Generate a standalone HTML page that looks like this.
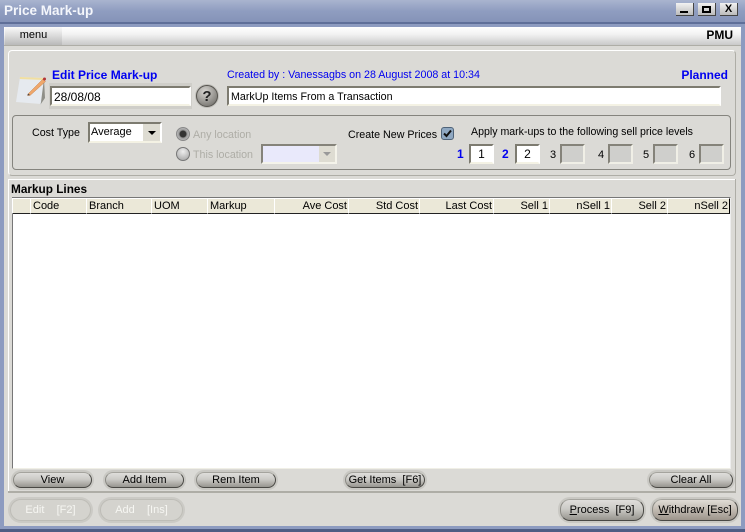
<!DOCTYPE html>
<html><head><meta charset="utf-8">
<style>
html,body{margin:0;padding:0;width:745px;height:532px;overflow:hidden}
body{position:relative;background:#dbdad6;font:10.7px "Liberation Sans",sans-serif;color:#000}
.a{position:absolute;white-space:nowrap;box-sizing:border-box}
.inp{position:absolute;box-sizing:border-box;background:#fff;border:2px solid;border-color:#7d7b70 #fff #f4f2e4 #7d7b70;line-height:18px}
.inp.d{background:#cfcfcc;border-color:#85837a #f0efe6 #f0efe6 #85837a}
.hd{position:absolute;top:198px;height:16px;box-sizing:border-box;background:#ebe8d8;border-top:1px solid #fff;border-left:1px solid #fff;border-right:1px solid #000;border-bottom:1px solid #222;line-height:15px;padding:0 1px 0 2px;overflow:hidden;white-space:nowrap;font-size:11px}
.r{text-align:right}
.btn{position:absolute;box-sizing:border-box;border-radius:9px;text-align:center;background:linear-gradient(#dfdedb,#cbcac6 45%,#97958f 100%);border:1px solid #4a4945;border-left-color:#8a8983;border-top-color:#a5a49e;box-shadow:0 0 0 2px #c9c8c3;white-space:nowrap;line-height:14px;font-size:11px}
.btn.big{border-radius:10px;line-height:21px}
.btn.dis{background:#d4d3ce;border:1px solid #bebdb7;box-shadow:0 0 0 2px #cbcac5;color:#f6f6f2;line-height:21px}
</style></head><body>
<!-- window frame -->
<div class="a" style="left:0;top:0;width:745px;height:22px;background:linear-gradient(#a9b4cf,#8f9dc0 50%,#8593b8)"></div>
<div class="a" style="left:0;top:22px;width:745px;height:2px;background:#5f6f99"></div>
<div class="a" style="left:0;top:24px;width:745px;height:3px;background:#8d9bc0"></div>
<div class="a" style="left:0;top:24px;width:4px;height:508px;background:#8d9bc0"></div>
<div class="a" style="left:741px;top:24px;width:4px;height:508px;background:#8d9bc0"></div>
<div class="a" style="left:0;top:526px;width:745px;height:3px;background:#8d9bc0"></div>
<div class="a" style="left:0;top:529px;width:745px;height:3px;background:#4f5d84"></div>
<div class="a" style="left:4px;top:3px;font-size:13.5px;font-weight:bold;color:#f4f6fb;line-height:15px">Price Mark-up</div>
<!-- window buttons -->
<div class="a" style="left:676px;top:3px;width:18px;height:13px;background:linear-gradient(#f2f2f2,#bcbcbc);border-right:1px solid #444;border-bottom:1px solid #444"><div class="a" style="left:4px;top:8px;width:8px;height:2px;background:#000"></div></div>
<div class="a" style="left:698px;top:3px;width:18px;height:13px;background:linear-gradient(#f2f2f2,#bcbcbc);border-right:1px solid #444;border-bottom:1px solid #444"><div class="a" style="left:4px;top:3px;width:9px;height:7px;border:2px solid #000;border-top-width:2px"></div></div>
<div class="a" style="left:720px;top:3px;width:18px;height:13px;background:linear-gradient(#f2f2f2,#bcbcbc);border-right:1px solid #444;border-bottom:1px solid #444;font-weight:bold;font-size:11px;text-align:center;line-height:12px">X</div>
<!-- menu bar -->
<div class="a" style="left:4px;top:27px;width:737px;height:19px;background:linear-gradient(#fff,#f2f2f2 40%,#c9c9c9);border-bottom:1px solid #aeada6"></div>
<div class="a" style="left:5px;top:27px;width:57px;height:18px;background:linear-gradient(#fafafa,#b9b9b9);text-align:center;line-height:17px;font-size:11px">menu</div>
<div class="a" style="right:12px;top:28px;font-weight:bold;font-size:12px;line-height:15px">PMU</div>
<!-- top panel -->
<div class="a" style="left:8px;top:50px;width:728px;height:126px;border-top:1px solid #fff;border-left:1px solid #fff;border-right:1px solid #aeada6;border-bottom:1px solid #aeada6;border-radius:4px"></div>
<svg class="a" style="left:16px;top:74px" width="34" height="34" viewBox="0 0 34 34">
<path d="M4 3L28 4L25 30L0 28Z" fill="#e6eaef"/>
<path d="M4 3L28 4L27.700 6L3.700 5Z" fill="#f1dfa0"/>
<path d="M28 5L29 24L24.500 30.500L25 28Z" fill="#8f8f88"/>
<path d="M12 20L27 5L29.500 7.500L14 21.500L11.500 21.500Z" fill="#efa76b" stroke="#c78450" stroke-width=".5"/>
<circle cx="28.500" cy="5" r="1.500" fill="#b3363a"/>
<path d="M12 19.500L11.500 21.500L14 21Z" fill="#444"/>
</svg>
<div class="a" style="left:52px;top:68px;color:#0000f0;font-weight:bold;font-size:12px;line-height:14px">Edit Price Mark-up</div>
<div class="a" style="left:49px;top:83px;width:143px;height:26px;background:#cfcec9"></div>
<div class="inp" style="left:50px;top:86px;width:141px;height:20px;padding-left:2px;font-size:12px">28/08/08</div>
<svg class="a" style="left:194px;top:83px" width="26" height="26"><defs><radialGradient id="g" cx=".4" cy=".3" r=".8"><stop offset="0" stop-color="#d8d6d2"/><stop offset="1" stop-color="#6f6d68"/></radialGradient></defs><circle cx="13" cy="13" r="12" fill="#c0bfba"/><circle cx="13" cy="13" r="10.500" fill="url(#g)" stroke="#55534e"/><text x="13" y="18" text-anchor="middle" font-family="Liberation Sans" font-weight="bold" font-size="15" fill="#222">?</text></svg>
<div class="a" style="left:227px;top:68px;color:#0000f0;font-size:10.7px;line-height:14px">Created by : Vanessagbs on 28 August 2008 at 10:34</div>
<div class="a" style="right:17px;top:68px;color:#0000f0;font-weight:bold;font-size:12px;line-height:15px">Planned</div>
<div class="inp" style="left:227px;top:86px;width:494px;height:20px;padding-left:2px;font-size:10.7px">MarkUp Items From a Transaction</div>
<!-- cost panel -->
<div class="a" style="left:12px;top:115px;width:719px;height:55px;border:1px solid #85847e;border-radius:4px"></div>
<div class="a" style="left:32px;top:126px;line-height:14px">Cost Type</div>
<div class="inp" style="left:88px;top:122px;width:74px;height:21px;padding-left:1px;font-size:11px;line-height:17px">Average<div class="a" style="right:0;top:0;width:18px;height:17px;background:#dedcd2;border-left:1px solid #fff"><div class="a" style="left:5px;top:7px;border:4px solid transparent;border-top:4px solid #000;border-bottom:0"></div></div></div>
<div class="a" style="left:176px;top:127px;width:14px;height:14px;border-radius:50%;background:radial-gradient(circle at 50% 50%,#333 0 3px,#999 4px,#ddd);border:1px solid #888"></div>
<div class="a" style="left:193px;top:128px;color:#aeada6;line-height:14px">Any location</div>
<div class="a" style="left:176px;top:147px;width:14px;height:14px;border-radius:50%;background:radial-gradient(circle at 50% 30%,#eee,#9f9f9f);border:1px solid #777"></div>
<div class="a" style="left:193px;top:148px;color:#aeada6;line-height:14px">This location</div>
<div class="inp" style="left:261px;top:144px;width:76px;height:20px;background:#e9e9fb;border-color:#85837a #f4f3ea #f4f3ea #85837a"><div class="a" style="right:0;top:0;width:16px;height:16px;background:#dedcd2"><div class="a" style="left:4px;top:6px;border:4px solid transparent;border-top:4px solid #999;border-bottom:0"></div></div></div>
<div class="a" style="left:348px;top:128px;line-height:14px">Create New Prices</div>
<div class="a" style="left:441px;top:127px;width:13px;height:13px;background:#8fa8c2;border:1px solid #4f6379;border-radius:3px"><svg width="11" height="11" style="display:block"><path d="M2 5.500L4.500 8 9 2.500" stroke="#111" stroke-width="2" fill="none"/></svg></div>
<div class="a" style="left:471px;top:125px;font-size:10.6px;line-height:14px">Apply mark-ups to the following sell price levels</div>
<div class="a" style="left:457px;top:147px;color:#0000f0;font-weight:bold;font-size:12px;line-height:14px">1</div>
<div class="inp" style="left:469px;top:144px;width:25px;height:20px;text-align:center;font-size:12px;line-height:17px">1</div>
<div class="a" style="left:502px;top:147px;color:#0000f0;font-weight:bold;font-size:12px;line-height:14px">2</div>
<div class="inp" style="left:515px;top:144px;width:25px;height:20px;text-align:center;font-size:12px;line-height:17px">2</div>
<div class="a" style="left:550px;top:148px;line-height:14px;font-size:11px">3</div><div class="inp d" style="left:560px;top:144px;width:25px;height:20px"></div>
<div class="a" style="left:598px;top:148px;line-height:14px;font-size:11px">4</div><div class="inp d" style="left:608px;top:144px;width:25px;height:20px"></div>
<div class="a" style="left:643px;top:148px;line-height:14px;font-size:11px">5</div><div class="inp d" style="left:653px;top:144px;width:25px;height:20px"></div>
<div class="a" style="left:689px;top:148px;line-height:14px;font-size:11px">6</div><div class="inp d" style="left:699px;top:144px;width:25px;height:20px"></div>
<!-- markup panel -->
<div class="a" style="left:8px;top:179px;width:728px;height:1px;background:#fff"></div>
<div class="a" style="left:8px;top:179px;width:1px;height:313px;background:#fff"></div>
<div class="a" style="left:735px;top:179px;width:1px;height:313px;background:#aeada6"></div>
<div class="a" style="left:8px;top:491px;width:728px;height:2px;background:#aeada6"></div>
<div class="a" style="left:11px;top:182px;font-weight:bold;font-size:11.800px;line-height:14px">Markup Lines</div>
<!-- grid -->
<div class="a" style="left:12px;top:197px;width:719px;height:272px;background:#fff;border-top:1px solid #777;border-left:1px solid #777;border-right:1px solid #eee;border-bottom:1px solid #f0efe6"></div>
<div class="hd" style="left:12px;width:19px"></div>
<div class="hd" style="left:30px;width:57px">Code</div>
<div class="hd" style="left:86px;width:66px">Branch</div>
<div class="hd" style="left:151px;width:57px">UOM</div>
<div class="hd" style="left:207px;width:68px">Markup</div>
<div class="hd r" style="left:274px;width:75px">Ave Cost</div>
<div class="hd r" style="left:348px;width:72px">Std Cost</div>
<div class="hd r" style="left:419px;width:75px">Last Cost</div>
<div class="hd r" style="left:493px;width:57px">Sell 1</div>
<div class="hd r" style="left:549px;width:63px">nSell 1</div>
<div class="hd r" style="left:611px;width:57px">Sell 2</div>
<div class="hd r" style="left:667px;width:63px">nSell 2</div>
<!-- buttons -->
<div class="btn" style="left:13px;top:472px;width:79px;height:16px">View</div>
<div class="btn" style="left:105px;top:472px;width:79px;height:16px">Add Item</div>
<div class="btn" style="left:196px;top:472px;width:80px;height:16px">Rem Item</div>
<div class="btn" style="left:345px;top:472px;width:80px;height:16px;">Get Items&nbsp; [F6]</div>
<div class="btn" style="left:649px;top:472px;width:84px;height:16px">Clear All</div>
<div class="btn dis" style="left:10px;top:499px;width:81px;height:22px;border-radius:11px">Edit &nbsp;&nbsp; [F2]</div>
<div class="btn dis" style="left:100px;top:499px;width:83px;height:22px;border-radius:11px">Add &nbsp;&nbsp; [Ins]</div>
<div class="btn big" style="left:560px;top:499px;width:84px;height:22px"><u>P</u>rocess&nbsp; [F9]</div>
<div class="btn big" style="left:652px;top:499px;width:86px;height:22px;background:linear-gradient(#e0dcd6,#c4bdb4 45%,#9c948b)"><u>W</u>ithdraw [Esc]</div>
</body></html>
